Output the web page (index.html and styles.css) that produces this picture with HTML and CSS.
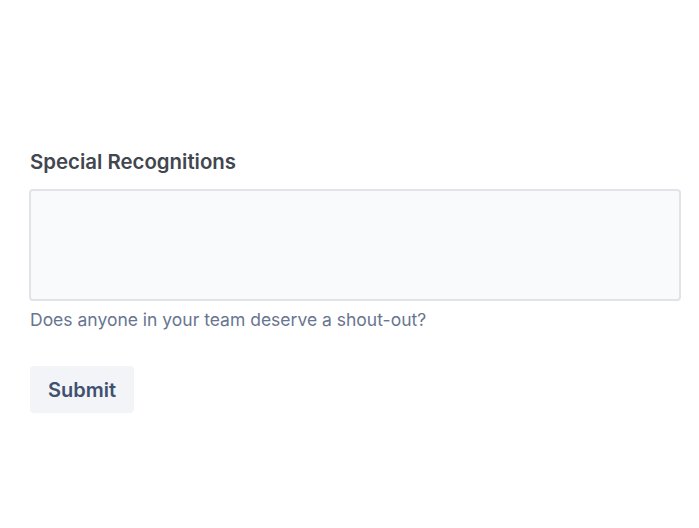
FILE: index.html
```html
<!DOCTYPE html>
<html>
<head>
<meta charset="utf-8">
<link rel="stylesheet" href="styles.css">
</head>
<body>
<form class="form">
  <div class="field">
    <label class="label" for="rec">Special Recognitions</label>
    <textarea id="rec" class="textarea"></textarea>
    <div class="helper">Does anyone in your team deserve a shout-out?</div>
  </div>
  <div class="actions">
    <button type="button" class="btn">Submit</button>
  </div>
</form>
</body>
</html>
```

FILE: styles.css
```css
html, body {
  margin: 0;
  padding: 0;
  background: #ffffff;
}
body {
  font-family: Inter, "Liberation Sans", Arial, sans-serif;
  color: #172b4d;
}
.form {
  padding: 150px 18px 0 29px;
}
.field {
  display: flex;
  flex-direction: column;
}
.label {
  font-size: 20.4px;
  font-weight: 600;
  color: #42464f;
  line-height: 24px;
  margin-bottom: 15px;
  margin-left: 1px;
}
.textarea {
  box-sizing: border-box;
  width: 652px;
  height: 112px;
  border: 2px solid #e1e3e8;
  border-radius: 4px;
  background: #f9fafc;
  resize: none;
  margin: 0;
  padding: 8px;
  font: inherit;
}
.helper {
  margin-top: 7px;
  margin-left: 1px;
  font-size: 17.5px;
  line-height: 24px;
  color: #687590;
}
.actions {
  margin-top: 34px;
}
.btn {
  margin-left: 1px;
  width: 104px;
  height: 47px;
  border: none;
  border-radius: 4px;
  background: #f3f4f7;
  color: #3f5170;
  font-family: inherit;
  font-size: 20px;
  font-weight: 600;
  padding: 0;
}
```
